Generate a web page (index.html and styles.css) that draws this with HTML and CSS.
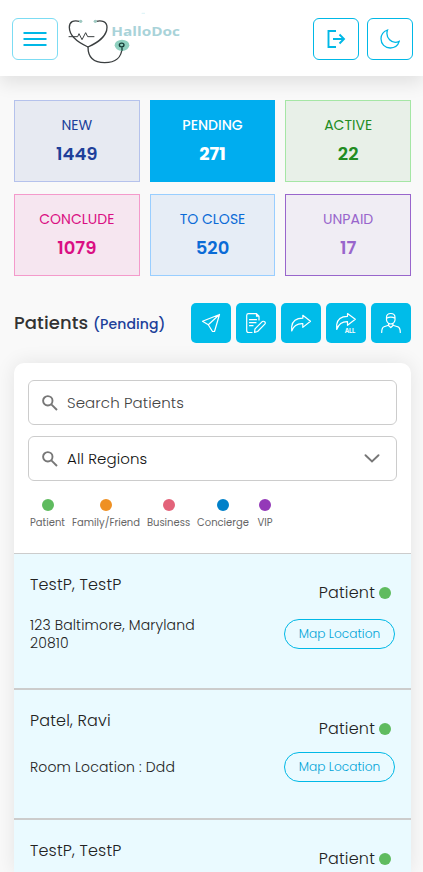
FILE: index.html
```html
<!DOCTYPE html>
<html lang="en">
<head>
<meta charset="utf-8">
<meta name="viewport" content="width=device-width, initial-scale=1">
<title>HalloDoc</title>
<link rel="stylesheet" href="styles.css">
</head>
<body>
<header class="topbar">
  <button class="icon-btn menu" aria-label="Menu"><svg width="24" height="16" viewBox="0 0 24 16"><path d="M.5 2h23M.5 8h23M.5 14h23" stroke-width="1.8"/></svg></button>
  <svg class="logo" width="120" height="60" viewBox="198 30 360 180">
    <g fill="none" stroke="#3b3f40" stroke-width="4" stroke-linecap="round">
      <path d="M238 64C220 60 208 65 208 82C208 111 235 128 264 141C292 128 321 111 321 82C321 65 305 60 289 64"/>
      <path d="M264 141C264 171 281 188 314 188C347 188 365 171 366 144"/>
      <path d="M207 110H233L237 101L246 119L257 98L263 110H282" stroke-width="3"/>
    </g>
    <circle cx="242" cy="64" r="5" fill="#9fc9c1"/><circle cx="286" cy="64" r="5" fill="#9fc9c1"/>
    <ellipse cx="366" cy="136" rx="22" ry="17" fill="#8fd0bf"/>
    <ellipse cx="365" cy="135" rx="7" ry="5.500" fill="#8fd0bf" stroke="#173f38" stroke-width="4"/>
    <path d="M366 142V152" stroke="#173f38" stroke-width="4"/>
    <path d="M425 40h10" stroke="#c9edf3" stroke-width="2"/>
    <text class="logo-text" x="334" y="107" textLength="206" lengthAdjust="spacingAndGlyphs">HalloDoc</text>
  </svg>
  <div class="top-actions">
    <button class="icon-btn" aria-label="Log out"><svg width="20" height="20" viewBox="0 0 20 20"><path d="M10 2H2.500V18H10M7 10H18M13.500 5.500L18 10L13.500 14.500" stroke-width="1.900"/></svg></button>
    <button class="icon-btn" aria-label="Dark mode"><svg width="20" height="20" viewBox="0 0 20 20"><path d="M7.500 1C3.500 2.500 1 5.600 1 9.800C1 15 5 19 10.200 19C14.500 19 18 16.500 19.200 12.400C16 13.800 12.200 13.400 9.600 10.700C7 8.100 6.400 4.400 7.500 1Z" stroke-width="1.300"/></svg></button>
  </div>
</header>
<main class="page">
  <section class="stats">
    <div class="stat new"><span class="label">NEW</span><strong>1449</strong></div>
    <div class="stat pending"><span class="label">PENDING</span><strong>271</strong></div>
    <div class="stat active"><span class="label">ACTIVE</span><strong>22</strong></div>
    <div class="stat conclude"><span class="label">CONCLUDE</span><strong>1079</strong></div>
    <div class="stat close"><span class="label">TO CLOSE</span><strong>520</strong></div>
    <div class="stat unpaid"><span class="label">UNPAID</span><strong>17</strong></div>
  </section>
  <section class="heading">
    <h1>Patients <span>(Pending)</span></h1>
    <div class="tools">
      <button aria-label="Send link"><svg viewBox="0 0 40 40"><path d="M28.500 11.500L11.500 18.300L17.300 21.800L21.500 28.500H23.500ZM28.500 11.500L17.300 21.800"/></svg></button>
      <button aria-label="Create request"><svg viewBox="0 0 40 40"><path d="M16 29.500H12.500Q10.700 29.500 10.700 27.500V12.500Q10.700 10.700 12.500 10.700H20.500L23 13.200V17M20.500 10.700V13.200H23M13.500 16.700H20.500M13.500 19.700H20M13.500 22.700H17"/><path d="M18.500 29.300L19 25.800L26.200 18.600Q27.700 17.800 28.800 18.800Q29.800 20 28.800 21.200L21.600 28.500Z"/></svg></button>
      <button aria-label="Export"><svg viewBox="0 0 40 40"><path d="M10.700 28V23.500Q11.800 15.300 21.800 15.200V12.300L29.500 18.300L21.800 24.400V20.700Q13.500 20.300 10.700 28Z"/></svg></button>
      <button aria-label="Export all"><svg viewBox="0 0 40 40"><path d="M10.700 26.500V21.500Q11.800 13.500 21.500 13.300V10.500L29.300 16.300L21.500 22.300V18.700Q13.500 18.500 10.700 26.500Z"/><text class="all-text" x="18.800" y="29.600" textLength="10.500">ALL</text></svg></button>
      <button aria-label="Request support"><svg viewBox="0 0 40 40"><path d="M15.500 17V14.500Q15.500 10.500 19.800 10.500Q24 10.500 24 14.500V17Q23.500 20.500 19.800 21Q16 20.500 15.500 17ZM15.500 15.300Q20 13 24 15.300M17.500 20.500V22.500L19.800 24.500L22 22.500V20.500M17.500 22.200L13 23.700Q10.700 24.500 10.700 29.500M22 22.200L26.500 23.700Q29.300 24.500 29.300 29.500"/></svg></button>
    </div>
  </section>
  <section class="card">
    <div class="filters">
      <div class="field"><svg class="search" viewBox="0 0 16 16"><circle cx="5.800" cy="5.800" r="4.700"/><path d="M9.300 9.300L15 15"/></svg><span class="placeholder">Search Patients</span></div>
      <div class="field"><svg class="search" viewBox="0 0 16 16"><circle cx="5.800" cy="5.800" r="4.700"/><path d="M9.300 9.300L15 15"/></svg><span class="selected">All Regions</span><svg class="chevron" viewBox="0 0 16 9"><path d="M1.500 1.200L8 7.500L14.500 1.200"/></svg></div>
      <div class="legend">
        <div><i class="dot green"></i><span>Patient</span></div>
        <div><i class="dot orange"></i><span>Family/Friend</span></div>
        <div><i class="dot pink"></i><span>Business</span></div>
        <div><i class="dot blue"></i><span>Concierge</span></div>
        <div><i class="dot purple"></i><span>VIP</span></div>
      </div>
    </div>
    <article class="row first">
      <div class="info"><h2>TestP, TestP</h2><p class="address">123 Baltimore, Maryland 20810</p></div>
      <div class="side"><span class="kind">Patient <i class="dot green"></i></span><button class="map">Map Location</button></div>
    </article>
    <article class="row">
      <div class="info"><h2>Patel, Ravi</h2><p class="room">Room Location : Ddd</p></div>
      <div class="side"><span class="kind">Patient <i class="dot green"></i></span><button class="map">Map Location</button></div>
    </article>
    <article class="row last">
      <div class="info"><h2>TestP, TestP</h2></div>
      <div class="side"><span class="kind">Patient <i class="dot green"></i></span></div>
    </article>
  </section>
</main>
</body>
</html>
```
FILE: styles.css
```css
* { box-sizing: border-box; }
body { margin: 0; background: #f9f9f9; color: #333; font-family: Poppins, Inter, sans-serif; }
button { font-family: inherit; padding: 0; }
h1, h2, p { margin: 0; }
svg { flex: none; }

.topbar { height: 76px; display: flex; align-items: flex-start; padding: 18px 10px 0 12px; background: #fff; box-shadow: 0 8px 16px rgba(0, 0, 0, .09); }
.icon-btn { width: 46px; height: 42px; display: flex; align-items: center; justify-content: center; background: #fff; border: 1px solid #00b8e6; border-radius: 6px; }
.icon-btn svg { fill: none; stroke: #00b8e6; }
.icon-btn.menu { border-color: #7cdcf3; }
.logo { margin: -8px 0 0 8px; }
.logo-text { font: 700 37px "Open Sans", sans-serif; fill: #a9d3d9; }
.top-actions { display: flex; gap: 8px; margin-left: auto; }

.page { padding: 24px 12px 0 14px; }
.stats { display: grid; grid-template-columns: repeat(3, 1fr); gap: 12px 10px; }
.stat { height: 82px; display: flex; flex-direction: column; align-items: center; padding-top: 13px; border: 1px solid; }
.label { font-size: 14px; line-height: 22px; }
.stat strong { font-size: 18px; line-height: 26px; font-weight: 600; margin-top: 5px; }
.new { color: #203f9a; background: #e7eaf2; border-color: #b5c2ec; }
.pending { color: #fff; background: #00adef; border-color: #00adef; }
.pending .label { font-weight: 500; }
.pending strong { font-weight: 700; }
.active { color: #228c22; background: #e8f0e8; border-color: #a5e6a5; }
.conclude { color: #da0f83; background: #f6e6f0; border-color: #f49acb; }
.close { color: #0a6bd6; background: #e6edf6; border-color: #99ceff; }
.unpaid { color: #9966cc; background: #f0edf4; border-color: #9966cc; }

.heading { height: 40px; margin-top: 27px; display: flex; align-items: center; justify-content: space-between; }
h1 { margin-top: -2px; font-size: 18px; font-weight: 500; white-space: nowrap; letter-spacing: .1px; }
h1 span { font-size: 14px; color: #203f9a; }
.tools { display: flex; gap: 5px; }
.tools button { width: 40px; height: 40px; border: 0; border-radius: 5px; background: #00bce9; }
.tools svg { display: block; fill: none; stroke: #fff; stroke-width: 1.2; stroke-linejoin: round; stroke-linecap: round; }
.all-text { font: 700 6px Inter, sans-serif; fill: #fff; stroke: none; }

.card { height: 509px; margin-top: 20px; overflow: hidden; border-radius: 10px 10px 0 0; background: #fff; box-shadow: 0 0 20px rgba(0, 0, 0, .09); }
.filters { height: 190px; padding: 17px 14px 0; }
.field { height: 45px; margin-bottom: 11px; display: flex; align-items: center; padding: 0 16px 0 13px; border: 1px solid #ccc; border-radius: 6px; font-size: 15px; font-weight: 300; letter-spacing: .1px; }
.search { width: 16px; height: 16px; margin-right: 9px; fill: none; stroke: #777; stroke-width: 1.9; }
.placeholder { color: #444; }
.selected { color: #111; }
.chevron { width: 16px; height: 9px; margin-left: auto; fill: none; stroke: #777; stroke-width: 1.9; stroke-linecap: round; }
.legend { display: grid; grid-template-columns: 35px 68px 43px 52px 18px; gap: 7px; margin: 18px 0 0 2px; }
.legend div { display: flex; flex-direction: column; align-items: center; font-size: 10px; line-height: 14px; color: #666; white-space: nowrap; gap: 5px; }
.dot { display: inline-block; width: 12px; height: 12px; border-radius: 50%; }
.green { background: #5fbb5f; }
.orange { background: #ef9023; }
.pink { background: #e3637a; }
.blue { background: #0080c9; }
.purple { background: #9439b8; }

.row { height: 130px; display: flex; justify-content: space-between; padding: 0 16px; background: #eafaff; border-bottom: 2px solid #ccc; color: #222; font-weight: 300; letter-spacing: .14px; }
.row.first { height: 137px; border-top: 1px solid #ccc; }
.row.last { height: 52px; border-bottom: 0; }
.info { width: 190px; }
h2 { margin-top: 19px; font-size: 16px; line-height: 24px; font-weight: 300; letter-spacing: .17px; }
.address { margin-top: 19px; font-size: 14px; line-height: 18px; }
.room { margin-top: 25px; font-size: 14px; line-height: 18px; }
.side { display: flex; flex-direction: column; align-items: flex-end; }
.kind { display: flex; align-items: center; gap: 4px; margin: 27px 4px 0 0; font-size: 16px; line-height: 24px; letter-spacing: .17px; }
.map { width: 111px; height: 30px; margin-top: 11px; background: transparent; border: 1px solid #00b8e6; border-radius: 15px; color: #00a4d8; font-size: 12.200px; font-weight: 300; }
.first .map { margin-top: 14px; }
```
